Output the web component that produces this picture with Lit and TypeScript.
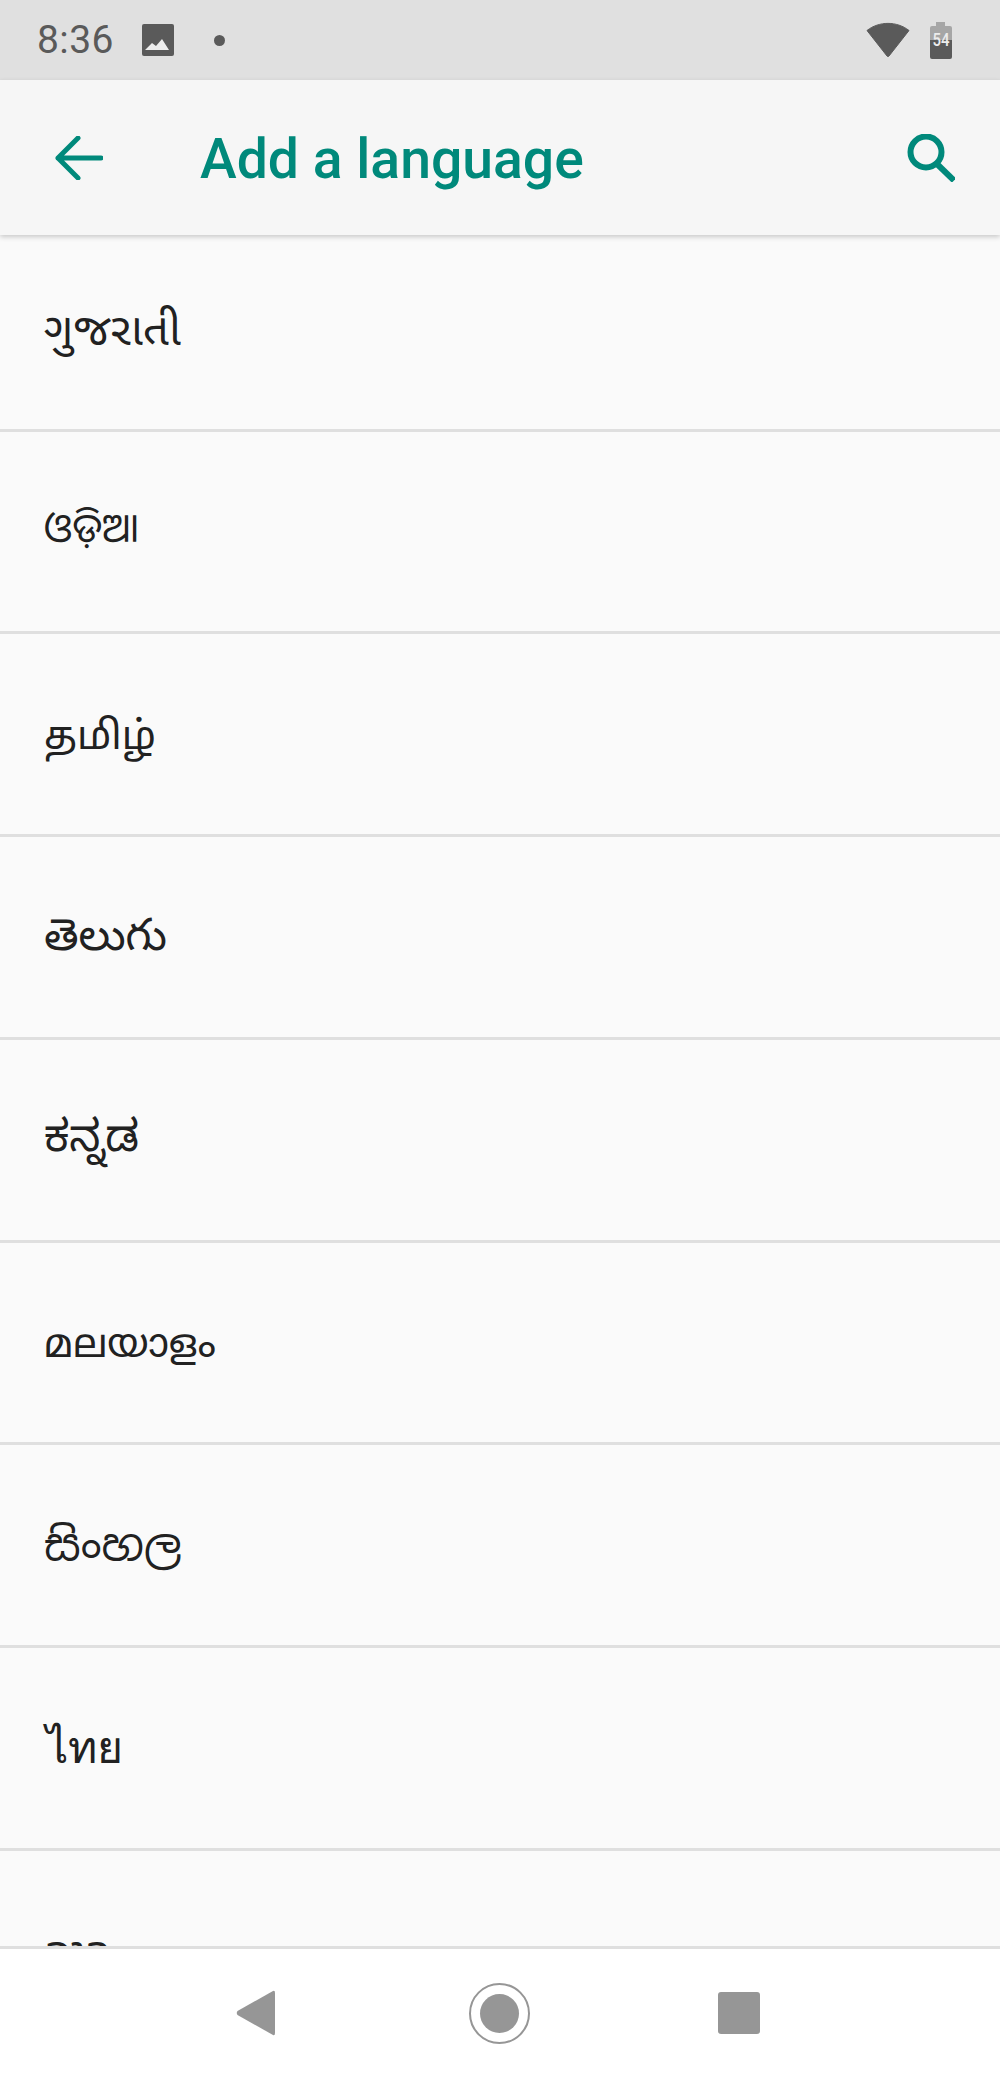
import { LitElement, html, css } from "lit";
import { customElement } from "lit/decorators.js";

const LANGS = [
  { t: "ગુજરાતી", c: "gu", lang: "gu" },
  { t: "ଓଡ଼ିଆ", c: "or", lang: "or" },
  { t: "தமிழ்", c: "ta", lang: "ta" },
  { t: "తెలుగు", c: "te", lang: "te" },
  { t: "ಕನ್ನಡ", c: "kn", lang: "kn" },
  { t: "മലയാളം", c: "ml", lang: "ml" },
  { t: "සිංහල", c: "si", lang: "si" },
  { t: "ไทย", c: "th", lang: "th" },
  { t: "ລາວ", c: "lo", lang: "lo" },
];

@customElement("app-root")
export class AppRoot extends LitElement {
  static styles = css`
    :host { display: block; width: 1000px; height: 2079px; font-family: Roboto, "Noto Sans", sans-serif; background: #fff; }
    .page { display: flex; flex-direction: column; height: 2079px; overflow: hidden; }
    .status { height: 80px; flex: none; background: #e0e0e0; display: flex; align-items: center; padding: 0 48px 0 37px; color: #5a5a5a; box-sizing: border-box; }
    .time { font-size: 39px; letter-spacing: 0.4px; width: 105px; }
    .status svg { display: block; }
    .dot { width: 11px; height: 11px; border-radius: 50%; background: #5a5a5a; margin-left: 40px; }
    .spacer { flex: 1; }
    .wifi { margin-right: 20px; }
    .toolbar { height: 155px; flex: none; background: #f6f6f6; display: flex; align-items: center; box-shadow: 0 2px 5px rgba(0,0,0,.2); position: relative; z-index: 1; padding: 0 45px 0 55px; box-sizing: border-box; }
    .title { font-size: 55.300px; font-weight: 500; color: #00897b; margin-left: 97px; flex: 1; padding-top: 3px; }
    .list { flex: 1; min-height: 0; overflow: hidden; background: #fafafa; }
    .row { height: 202.8px; box-sizing: border-box; border-bottom: 3px solid #dfdfdf; display: flex; align-items: center; padding-left: 44px; color: #212121; font-family: "Noto Sans", Roboto, "DejaVu Sans", sans-serif; }
    .row:first-child { height: 196.500px; }
    .gu { font-size: 45.300px; padding-top: 4px; font-family: "Noto Sans Gujarati", "Noto Sans", sans-serif; }
    .or { font-size: 40.700px; padding-bottom: 11px; font-family: "Noto Sans Oriya", "Noto Sans", sans-serif; }
    .ta { font-size: 40px; padding-top: 9px; font-family: "Noto Sans Tamil", "Noto Sans", sans-serif; }
    .te { font-size: 44.500px; padding-top: 8px; font-family: "Noto Sans Telugu", "Noto Sans", sans-serif; }
    .kn { font-size: 44px; padding-top: 11px; font-family: "Noto Sans Kannada", "Noto Sans", sans-serif; }
    .ml { font-size: 40px; padding-top: 8px; font-family: "Noto Sans Malayalam", "Noto Sans", sans-serif; }
    .si { font-size: 44.500px; font-family: "Noto Sans Sinhala", "Noto Sans", sans-serif; }
    .th { font-size: 44.500px; padding-bottom: 2px; padding-left: 46px; }
    .lo { font-size: 44px; font-family: "Noto Sans Lao", "Noto Sans", sans-serif; }
    .nav { height: 133px; flex: none; background: #fff; border-top: 3px solid #dfdfdf; box-sizing: border-box; display: flex; justify-content: flex-start; align-items: center; padding: 0 0 2px 236px; }
    .nav .home { margin-left: 194px; }
    .nav .recent { margin-left: 188px; }
  `;

  render() {
    return html`<div class="page">
      <div class="status">
        <span class="time">8:36</span>
        <svg width="32" height="32" viewBox="0 0 32 32"><rect width="32" height="32" rx="2" fill="#5a5a5a"/><path d="M3 26 L10 19 L14 22 L20 15 L27 26 Z" fill="#ececec"/></svg>
        <span class="dot"></span>
        <span class="spacer"></span>
        <svg class="wifi" width="44" height="36" viewBox="0 0 44 36"><path d="M1 8.500 C13 -1 31 -1 43 8.500 L23 34 Q22 35 21 34 Z" fill="#5a5a5a" stroke="#5a5a5a" stroke-linejoin="round"/></svg>
        <svg width="22" height="37" viewBox="0 0 22 37"><path d="M6 0h9v4h5q2 0 2 2v12H0V6q0-2 2-2h4z" fill="#a6a6a6"/><path d="M0 18h22v17q0 2-2 2H2q-2 0-2-2z" fill="#5a5a5a"/><text x="11" y="24" text-anchor="middle" font-size="18" font-weight="500" fill="#ececec" font-family="Roboto" textLength="17" lengthAdjust="spacingAndGlyphs">54</text></svg>
      </div>
      <div class="toolbar">
        <svg width="48" height="44" viewBox="0 0 48 44" fill="none" stroke="#00897b" stroke-width="5" stroke-linecap="round" stroke-linejoin="round"><path d="M46 22H3M23 2L3 22l20 20"/></svg>
        <span class="title">Add a language</span>
        <svg width="48" height="48" viewBox="0 0 48 48" fill="none" stroke="#00897b" stroke-width="6"><circle cx="19" cy="18" r="15.500"/><path d="M29.500 29.500L47 46.500"/></svg>
      </div>
      <div class="list">
        ${LANGS.map((l) => html`<div class="row ${l.c}" lang=${l.lang}>${l.t}</div>`)}
      </div>
      <div class="nav">
        <svg width="39" height="46" viewBox="0 0 39 46"><path d="M37 1 Q39 0 39 3V43Q39 46 37 45L1.500 25Q0 23 1.500 21Z" fill="#969696"/></svg>
        <svg class="home" width="61" height="61" viewBox="0 0 61 61"><circle cx="30.500" cy="30.500" r="29.500" fill="none" stroke="#969696" stroke-width="2"/><circle cx="30.500" cy="30.500" r="19.500" fill="#969696"/></svg>
        <svg class="recent" width="42" height="42" viewBox="0 0 42 42"><rect width="42" height="42" rx="3" fill="#969696"/></svg>
      </div>
    </div>`;
  }
}
